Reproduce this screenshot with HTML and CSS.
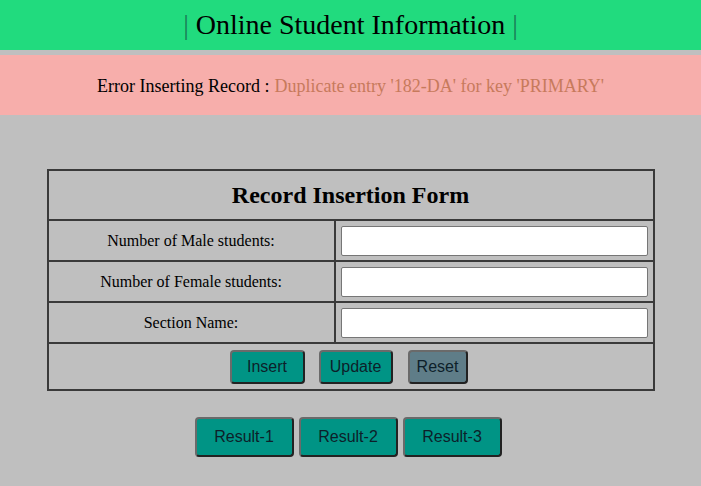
FILE: index.html
```html
<!DOCTYPE html>
<html>
<head>
<meta charset="utf-8">
<title>Online Student Information</title>
<link rel="stylesheet" href="styles.css">
</head>
<body>
<header class="topbar">
  <h1 class="title"><span class="pipe">|</span> Online Student Information <span class="pipe">|</span></h1>
</header>
<div class="error">Error Inserting Record : <span class="error-msg">Duplicate entry '182-DA' for key 'PRIMARY'</span></div>
<main class="content">
  <table class="form-table">
    <tr><th colspan="2" class="form-title">Record Insertion Form</th></tr>
    <tr>
      <td class="label">Number of Male students:</td>
      <td class="field"><input class="text-input" type="text"></td>
    </tr>
    <tr>
      <td class="label">Number of Female students:</td>
      <td class="field"><input class="text-input" type="text"></td>
    </tr>
    <tr>
      <td class="label">Section Name:</td>
      <td class="field"><input class="text-input" type="text"></td>
    </tr>
    <tr>
      <td colspan="2" class="actions">
        <button class="btn btn-insert">Insert</button>
        <button class="btn btn-update">Update</button>
        <button class="btn btn-reset">Reset</button>
      </td>
    </tr>
  </table>
  <div class="results">
    <button class="btn btn-result">Result-1</button>
    <button class="btn btn-result">Result-2</button>
    <button class="btn btn-result">Result-3</button>
  </div>
</main>
</body>
</html>
```
FILE: styles.css
```css
html, body {
  margin: 0;
  padding: 0;
  background: #bfbfbf;
  font-family: "Liberation Serif", "Times New Roman", serif;
}
.topbar {
  background: #21db7e;
  height: 50px;
  display: flex;
  align-items: center;
  justify-content: center;
}
.title {
  margin: 0;
  font-weight: normal;
  font-size: 28px;
  color: #000;
  line-height: 1;
  padding-bottom: 1px;
}
.pipe {
  color: #1a7a55;
}
.error {
  margin-top: 5px;
  background: #f7aeab;
  height: 60px;
  display: flex;
  align-items: center;
  justify-content: center;
  font-size: 18px;
  color: #000;
  padding-top: 2px;
  box-sizing: border-box;
}
.error-msg {
  color: #c77a5c;
  margin-left: 5px;
}
.content {
  padding-top: 54px;
}
.form-table {
  width: 608px;
  margin: 0 auto;
  border-collapse: collapse;
  border: 2px solid #3a3a3a;
}
.form-table th, .form-table td {
  border: 2px solid #3a3a3a;
}
.form-title {
  height: 48px;
  font-size: 24px;
  font-weight: bold;
  text-align: center;
  padding: 0;
}
.label {
  width: 285px;
  height: 39px;
  text-align: center;
  font-size: 16px;
  padding: 0;
}
.field {
  padding: 4px 5px 3px 5px;
}
.text-input {
  display: block;
  width: 100%;
  box-sizing: border-box;
  height: 30px;
  border: 1px solid #767676;
  border-radius: 2px;
  background: #fff;
  margin: 0;
}
.actions {
  text-align: center;
  height: 45px;
  padding: 0 4px 0 0;
}
.btn {
  font-family: "Liberation Sans", Arial, sans-serif;
  font-size: 16px;
  color: #0d1f2a;
  background: #009485;
  border: 2px solid;
  border-color: #6a6a6a #222 #222 #6a6a6a;
  border-radius: 4px;
  height: 34px;
  padding: 0;
  vertical-align: middle;
  cursor: pointer;
}
.btn-insert {
  width: 75px;
  margin-right: 10px;
}
.btn-update {
  width: 74px;
  margin-right: 11px;
}
.btn-reset {
  width: 60px;
  background: #5f7d88;
}
.results {
  margin-top: 26px;
  display: flex;
  justify-content: center;
  gap: 5px;
  padding-right: 5px;
}
.btn-result {
  width: 99px;
  height: 40px;
}
```
